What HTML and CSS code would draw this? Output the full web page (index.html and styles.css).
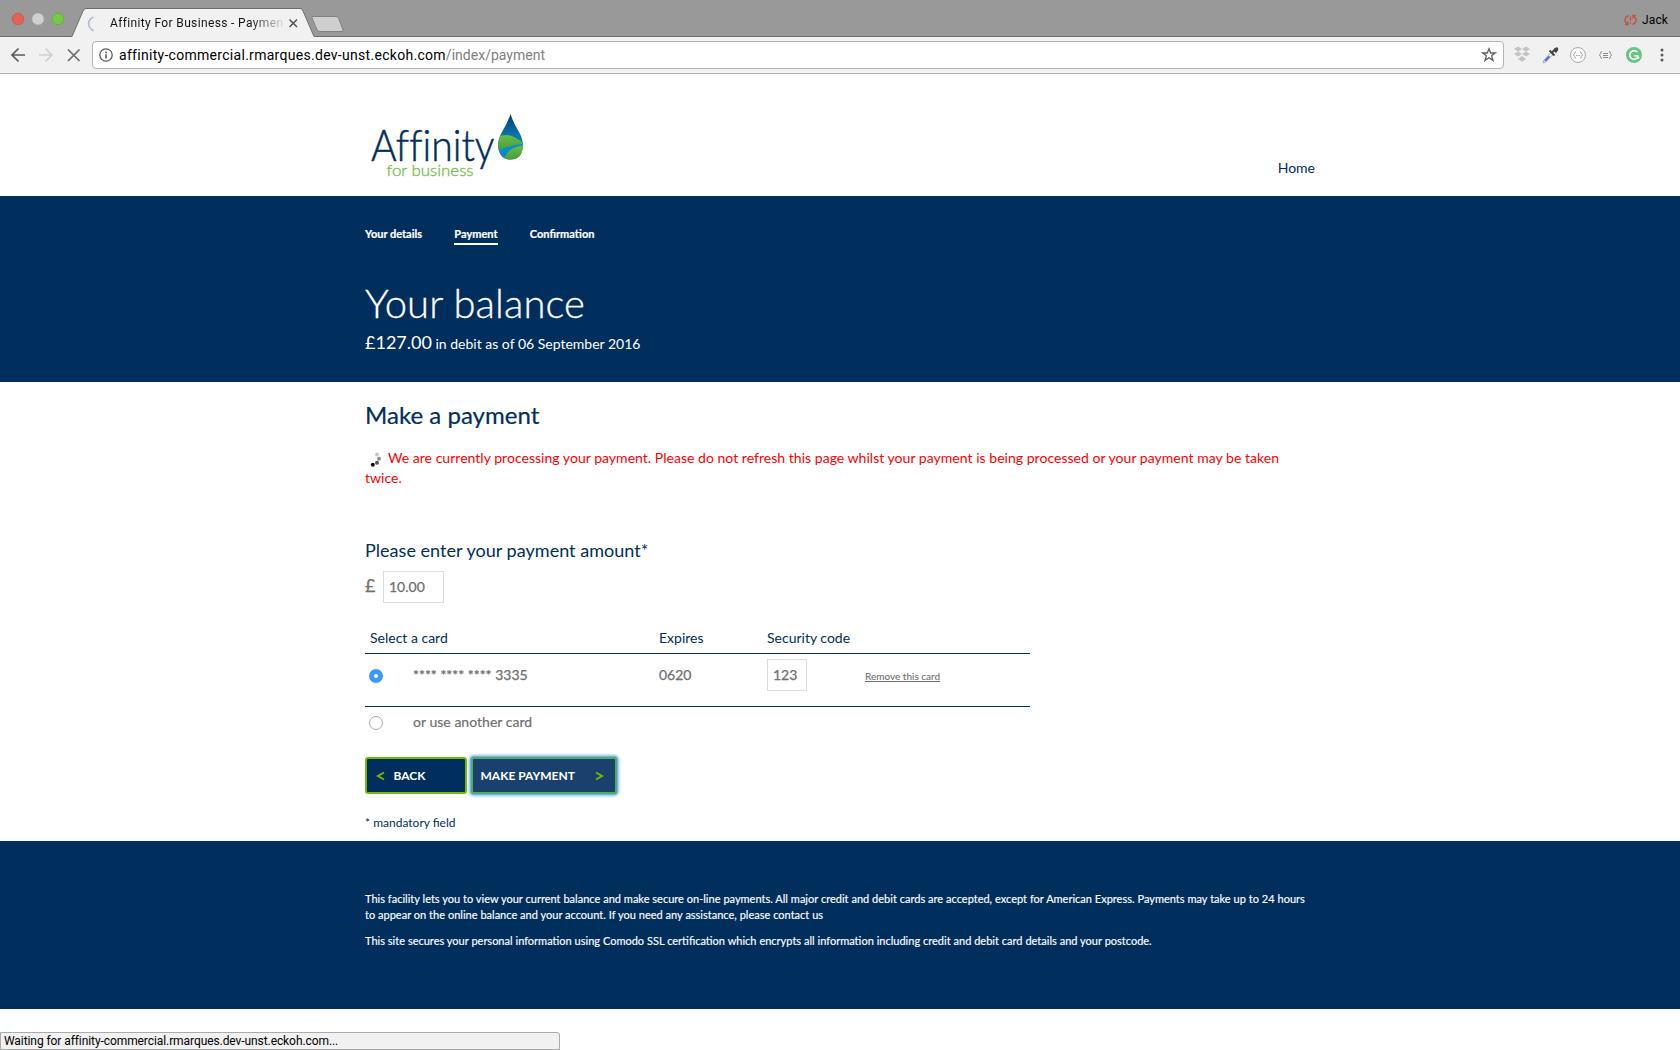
FILE: index.html
```html
<!DOCTYPE html>
<html lang="en">
<head>
<meta charset="utf-8">
<title>Affinity For Business - Payment</title>
<link rel="stylesheet" href="styles.css">
</head>
<body>
<div class="browser">
  <div class="tabstrip">
    <svg class="tabs" width="350" height="38" viewBox="0 0 350 38">
      <circle cx="18" cy="19" r="5.8" fill="#e4615a" stroke="#d0504a" stroke-width=".8"/>
      <circle cx="38" cy="19" r="5.8" fill="#d0d0d0" stroke="#b9b9b9" stroke-width=".8"/>
      <circle cx="58" cy="19" r="5.8" fill="#75ca45" stroke="#5fb130" stroke-width=".8"/>
      <path d="M0 36.5H72L83 11Q84 8.5 86 8.5H300Q302 8.5 303 11L314 36.5H350V38H0Z" fill="#f1f1f1"/>
      <path d="M0 36.5H72L83 11Q84 8.5 86 8.5H300Q302 8.5 303 11L314 36.5H350" fill="none" stroke="#6e6e6e"/>
      <path d="M313 16.500H336Q338 16.500 338.700 18.500L343 30Q343.500 31.500 342 31.500H320Q318 31.500 317 29.500L312 18Q311.500 16.500 313 16.500Z" fill="#cfcfcf" stroke="#828282"/>
      <path d="M93.500 17Q88.500 19.500 88.700 24Q89 28 93.500 31" fill="none" stroke="#b3bbd0" stroke-width="1.700"/>
      <path d="M289.500 19.500L297 27M297 19.500L289.500 27" stroke="#555" stroke-width="1.600"/>
    </svg>
    <span class="tab-title">Affinity For Business - Paymen</span>
    <div class="profile">
      <svg width="13" height="12" viewBox="0 0 13 12" fill="none" stroke="#c5503c" stroke-width="1.400"><path d="M4.500 1.500Q.8 3 1 6.500Q1.400 8.500 3.500 10M1.200 10.500H4V7.500M8.500 10.500Q12.200 9 12 5.500Q11.600 3.500 9.500 2M11.800 1.500H9V4.500"/><path d="M6.500 2.500V6.800M6.500 8.200V9.800"/></svg>
      <span>Jack</span>
    </div>
  </div>
  <div class="toolbar">
    <svg class="nav-icons" width="92" height="34" viewBox="0 0 92 34" fill="none" stroke-width="1.700">
      <path d="M25 17H12.500M18.500 10.500L12 17L18.500 23.500" stroke="#5a5a5a"/>
      <path d="M39 17H51.500M45.500 10.500L52 17L45.500 23.500" stroke="#d0d0d0"/>
      <path d="M68 11.500L79.500 23M79.500 11.500L68 23" stroke="#6a6a6a"/>
    </svg>
    <div class="omnibox">
      <svg width="14" height="14" viewBox="0 0 14 14" fill="none" stroke="#5a5a5a"><circle cx="7" cy="7" r="6.200" stroke-width="1.300"/><path d="M7 6.200V10.500M7 3.500V5.200" stroke-width="1.600"/></svg>
      <span class="url">affinity-commercial.rmarques.dev-unst.eckoh.com<span class="path">/index/payment</span></span>
      <svg class="star" width="16" height="16" viewBox="0 0 16 16" fill="none" stroke="#5f5f5f" stroke-width="1.300"><path d="M8 1.800L9.700 6H14.200L10.600 8.800L12 13.400L8 10.700L4 13.400L5.400 8.800L1.800 6H6.300Z"/></svg>
    </div>
    <svg class="extensions" width="176" height="34" viewBox="4 0 176 34">
      <g fill="#c3c3c3"><path d="M14 11L18 8.500L22 11L18 13.500ZM22 11L26 8.500L30 11L26 13.500ZM14 16L18 13.500L22 16L18 18.500ZM22 16L26 13.500L30 16L26 18.500ZM18 21L22 18L26 21L22 23.800Z"/></g>
      <path d="M43.500 22.500L51 14.500L53 16.500L45.500 24.200L43 24.700Z" fill="#eef2ff" stroke="#8899c5" stroke-width=".8"/>
      <path d="M45 23L49.500 18.300" stroke="#4e6ee0" stroke-width="2"/>
      <path d="M49.500 12.500L54.500 17.500M52 14.500L56 10.500" stroke="#444" stroke-width="2"/><path d="M53 12.500L56 15L58 12.500Q59 9.500 56.500 9.200Q54.500 9.500 53 12.500Z" fill="#444"/>
      <circle cx="78" cy="17" r="7.500" fill="#fafafa" stroke="#aaa"/>
      <g fill="none" stroke="#a0a0a0"><path d="M76 14Q74.500 14 74.500 15.500L73.500 17L74.500 18.500Q74.500 20 76 20M80 14Q81.500 14 81.500 15.500L82.500 17L81.500 18.500Q81.500 20 80 20"/><path d="M76 17.500H80" stroke-dasharray="1 .6"/></g>
      <g fill="none" stroke="#8b8b8b"><path d="M102 13.500Q100.500 13.500 100.500 15.500L99.500 17L100.500 18.500Q100.500 20.500 102 20.500M109 13.500Q110.500 13.500 110.500 15.500L111.500 17L110.500 18.500Q110.500 20.500 109 20.500M103 15.500H108M103 17.500H108M103 19.500H108" stroke-width="1"/></g>
      <circle cx="134" cy="17" r="8" fill="#6cc384"/>
      <path d="M137.500 14Q134 11.300 131 14Q128.500 17 131 20Q134 22.700 137.200 20L137.500 17.800H134.300M137.500 17.500L139 20.300" fill="none" stroke="#fff" stroke-width="1.500"/>
      <g fill="#585858"><circle cx="162" cy="12" r="1.500"/><circle cx="162" cy="17" r="1.500"/><circle cx="162" cy="22" r="1.500"/></g>
    </svg>
  </div>
</div>

<header class="site-header">
  <div class="wrap header-row">
    <svg class="logo" width="165" height="70" viewBox="0 0 165 70">
      <defs>
        <linearGradient id="drop" x1="0" y1="0" x2="0" y2="1"><stop offset="0" stop-color="#063c6c"/><stop offset=".5" stop-color="#0878b5"/><stop offset=".75" stop-color="#078fd0"/><stop offset="1" stop-color="#0878b5"/></linearGradient>
        <linearGradient id="field" x1="0" y1="0" x2="0" y2="1"><stop offset="0" stop-color="#6abe46"/><stop offset="1" stop-color="#459b3b"/></linearGradient>
        <clipPath id="shape"><path d="M145.500 4Q148 12 154 22Q158 29 158 36Q157 49.500 145.500 49.500Q134 49.500 133 36Q133 29 137 22Q143 12 145.500 4Z"/></clipPath>
      </defs>
      <text class="logo-name" x="6" y="50.500" textLength="123.500" lengthAdjust="spacingAndGlyphs">Affinity</text>
      <text class="logo-sub" x="21.500" y="65.500" textLength="87" lengthAdjust="spacingAndGlyphs">for business</text>
      <g clip-path="url(#shape)">
        <rect x="132" y="3" width="27" height="48" fill="url(#drop)"/>
        <path d="M132 28Q140 22.500 149 27Q155 30 159 34Q147 34.500 132 41Z" fill="url(#field)"/>
        <path d="M159 35Q149 36.500 144 41Q140 45 138 51H159Z" fill="url(#field)"/>
      </g>
    </svg>
    <a class="home">Home</a>
  </div>
</header>

<section class="banner">
  <div class="wrap">
    <nav class="steps"><span>Your details</span><span class="current">Payment</span><span>Confirmation</span></nav>
    <h1>Your balance</h1>
    <p class="balance"><span class="sum">£127.00</span> in debit as of 06 September 2016</p>
  </div>
</section>

<main class="wrap">
  <h2>Make a payment</h2>
  <p class="notice"><svg class="spinner" width="16" height="16" viewBox="0 0 16 16"><circle cx="9" cy="3.500" r="2" fill="#c6c6c6"/><circle cx="11" cy="7.700" r="2" fill="#8f8f8f"/><circle cx="9" cy="11.800" r="2" fill="#555"/><circle cx="4.800" cy="13.800" r="2" fill="#111"/></svg>We are currently processing your payment. Please do not refresh this page whilst your payment is being processed or your payment may be taken twice.</p>
  <h3>Please enter your payment amount*</h3>
  <div class="amount"><span class="pound">£</span><span class="field amount-field">10.00</span></div>
  <div class="cards">
    <div class="row head"><span class="wide">Select a card</span><span>Expires</span><span>Security code</span></div>
    <div class="row card"><i class="radio on"></i><span>**** **** **** 3335</span><span>0620</span><span class="field code">123</span><a class="remove">Remove this card</a></div>
    <div class="row other"><i class="radio"></i><span>or use another card</span></div>
  </div>
  <div class="buttons">
    <div class="btn back"><svg width="9" height="10" viewBox="0 0 9 10"><path d="M8 1.500L2 5L8 8.500"/></svg>BACK</div>
    <div class="btn pay">MAKE PAYMENT<svg width="9" height="10" viewBox="0 0 9 10"><path d="M1 1.500L7 5L1 8.500"/></svg></div>
  </div>
  <p class="mandatory">* mandatory field</p>
</main>

<footer class="site-footer">
  <div class="wrap">
    <p>This facility lets you to view your current balance and make secure on-line payments. All major credit and debit cards are accepted, except for American Express. Payments may take up to 24 hours<br>to appear on the online balance and your account. If you need any assistance, please contact us</p>
    <p>This site secures your personal information using Comodo SSL certification which encrypts all information including credit and debit card details and your postcode.</p>
  </div>
</footer>
<div class="status">Waiting for affinity-commercial.rmarques.dev-unst.eckoh.com...</div>
</body>
</html>
```
FILE: styles.css
```css
* { box-sizing: border-box; }
body { margin: 0; height: 1050px; overflow: hidden; display: flex; flex-direction: column; background: #fff; color: #002e5d; font: 14px/20px Lato, "Liberation Sans", sans-serif; }
p, h1, h2, h3 { margin: 0; font-weight: 400; }
svg { display: block; flex: none; }
.wrap { width: 950px; margin-left: 365px; }

.browser { flex: none; height: 74px; border-bottom: 1px solid #b3b3b3; background: #f1f1f1; font-family: Roboto, sans-serif; color: #000; }
.tabstrip { position: relative; display: flex; justify-content: space-between; height: 37px; background: linear-gradient(#999 0 36px, #6e6e6e 36px); }
.tab-title { position: absolute; left: 110px; top: 13px; width: 174px; overflow: hidden; white-space: nowrap; font-size: 12px; letter-spacing: .36px; background: linear-gradient(90deg, #111 80%, #ddd); background-clip: text; color: transparent; }
.profile { display: flex; gap: 5px; align-items: center; padding: 3px 12px 0 0; font-size: 12px; letter-spacing: .1px; }
.toolbar { display: flex; height: 36px; }
.nav-icons, .extensions { margin-top: 1px; }
.omnibox { display: flex; align-items: center; width: 1412px; height: 28px; margin-top: 4px; padding: 0 6px; border: 1px solid #b5b5b5; border-radius: 4px; background: #fff; }
.url { margin-left: 6px; letter-spacing: .29px; }
.path { color: #808080; letter-spacing: .02px; }
.star { margin-left: auto; }

.site-header { flex: none; height: 122px; }
.header-row { display: flex; justify-content: space-between; padding-top: 36px; }
.logo-name { font: 300 43px Lato, sans-serif; font-variant-ligatures: none; fill: #002e5d; stroke: #002e5d; stroke-width: .5px; }
.logo-sub { font: 300 16px Lato, sans-serif; fill: #6fbe44; stroke: #6fbe44; stroke-width: .3px; }
.home { margin-top: 48px; }

.banner { flex: none; height: 186px; padding-top: 28px; background: #002e5d; color: #fff; }
.steps { display: flex; gap: 32.3px; height: 21px; font: 700 11px/20px Lato, sans-serif; -webkit-text-stroke: .2px; }
.current { border-bottom: 2px solid #fff; }
h1 { margin-top: 33px; font-size: 40px; line-height: 50px; font-weight: 300; letter-spacing: .09px; -webkit-text-stroke: .3px; }
.balance { line-height: 28px; }
.sum { font-size: 18px; }

main { flex: none; height: 459px; }
h2 { padding-top: 17px; font-size: 24px; line-height: 32px; letter-spacing: .03px; -webkit-text-stroke: .2px; }
.notice { width: 930px; margin-top: 17px; color: #f00; letter-spacing: .029px; }
.spinner { display: inline-block; width: 16px; height: 16px; margin: 0 4px 0 3px; vertical-align: -4px; }
h3 { margin-top: 48px; font-size: 18px; line-height: 28px; letter-spacing: .03px; }
.amount { display: flex; gap: 8px; margin-top: 7px; color: #707070; -webkit-text-stroke: .25px; }
.pound { width: 10px; font-size: 18px; line-height: 28px; }
.field { display: block; height: 32px; padding: 0 5px; border: 1px solid #ddd; line-height: 30px; color: #707070; }
.amount-field { width: 61px; }
.cards { width: 665px; margin-top: 25px; }
.row { display: grid; grid-template-columns: 48px 246px 108px 98px 1fr; }
.head { height: 26px; border-bottom: 1px solid #002e5d; }
.wide { grid-column: 1 / 3; padding-left: 5px; }
.card { height: 53px; padding-top: 5px; border-bottom: 1px solid #002e5d; color: #707070; line-height: 32px; -webkit-text-stroke: .25px; }
.code { width: 40px; }
.remove { font-size: 10px; line-height: 34px; text-decoration: underline; -webkit-text-stroke: .1px; }
.radio { width: 14px; height: 14px; margin: 10px 0 0 4px; border: 1px solid #aaa; border-radius: 50%; background: #fff; }
.on { border: 5px solid #3b99fc; }
.other { height: 36px; padding-top: 5px; color: #707070; letter-spacing: .03px; -webkit-text-stroke: .2px; }
.other .radio { margin-top: 4px; }
.buttons { display: flex; gap: 4px; margin-top: 14px; }
.btn { display: flex; align-items: center; height: 37px; border: 2px solid #76b900; border-radius: 3px; background: #002e5d; color: #fff; font-weight: 700; font-size: 12px; }
.btn path { fill: none; stroke: #76b900; stroke-width: 2px; }
.back { width: 102px; padding-left: 9px; gap: 8.5px; }
.pay { width: 146px; padding-left: 7.5px; gap: 20.5px; border-color: #57a858; background: #1a416d; box-shadow: 0 0 0 1px #69b5ed, 0 0 3px 2px #7fbcf5; }
.mandatory { margin-top: 19px; font-size: 12px; }

.site-footer { flex: none; height: 168px; padding-top: 50px; background: #002e5d; color: #fff; font: 700 11px/16px Lato, sans-serif; word-spacing: .1px; -webkit-text-stroke: .15px; }
.site-footer p { margin-bottom: 10px; white-space: nowrap; }
.status { width: 560px; height: 18px; margin-top: auto; padding-left: 3px; border: 1px solid #aaa; border-radius: 0 3px 0 0; background: #f1f1f1; color: #000; font: 12px/16px Roboto, sans-serif; letter-spacing: -.08px; }
```
